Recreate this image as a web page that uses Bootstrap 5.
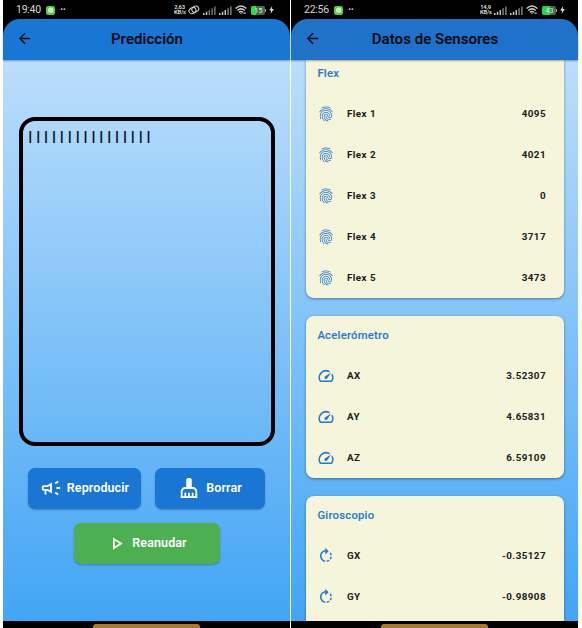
<!DOCTYPE html>
<html lang="es">
<head>
<meta charset="utf-8">
<meta name="viewport" content="width=device-width, initial-scale=1">
<title>Predicción y Datos de Sensores</title>
<link href="https://cdn.jsdelivr.net/npm/bootstrap@5.3.0/dist/css/bootstrap.min.css" rel="stylesheet">
<style>
body{font-family:Roboto,sans-serif;background:#fff;width:582px;height:628px;overflow:hidden;line-height:1}
svg{fill:currentColor;flex:none;display:block}
.screens{padding-left:3px;gap:1px}
.phone{width:287px;height:628px;background:#000}
.status{height:19px;padding:1px 16px 0 13px;color:#d4d4d4;font-size:10.5px;letter-spacing:-.25px}
.phone-b .status{padding-right:13px}
.appicon{width:9px;height:9px;border-radius:2px;background:#58c83c;margin-left:5px}
.dots{margin-left:5px;font-weight:700}
.rate{font-size:5.8px;line-height:5.5px;font-weight:700;width:11px;letter-spacing:-.2px;white-space:nowrap}
.topbar{height:40.5px;background:#1976d2;border-radius:17px 17px 0 0;color:#040b16;padding-left:12.5px;box-shadow:0 1px 2px #0005;z-index:2}
.phone-b .topbar{background:#2071c8}
.topbar h1{font-size:15px;font-weight:600;letter-spacing:.04px;margin:0 0 1px;padding-right:28.5px}
.topbar svg{margin-bottom:2px}
.view{height:561.5px;background:linear-gradient(#bbdefb,#42a5f5);overflow:hidden}
.navbar-pill{height:7px;padding-top:3px}
.navbar-pill span{width:107px;height:4px;border-radius:3px 3px 0 0;background:#a87a2c}
.output{width:256px;height:329px;border:4px solid #000;border-radius:16px;margin-top:57.5px;padding:8px 0 0 5.6px;font-size:16.5px;line-height:17px;color:#04101c;letter-spacing:-.35px}
.action{height:40.5px;border:0;border-radius:7px;color:#fff;background:#1976d2;font-size:12.5px;font-weight:600;letter-spacing:.1px;box-shadow:0 1px 2px #0004;padding:0}
.act-play{width:113px;gap:5px}
.act-clear{width:110px;gap:6px}
.act-go{width:146px;gap:5px;background:#4caf50}
.sensors{padding:0 14px 0 15px;margin-top:-6px;gap:17.5px}
.sensor{background:#f5f5dc;border-radius:8px;box-shadow:0 1px 3px #0006;padding:0 18px 0 11.4px}
.sensor h2{height:39.5px;padding-top:2px;font-size:11.3px;font-weight:500;color:#2a7ac8;margin:0;letter-spacing:.24px;-webkit-text-stroke:.1px #2a7ac8}
.reading{height:41px;font-size:9.8px;font-weight:700;color:#1a1a18;letter-spacing:.45px}
.reading svg{color:#2878c8;margin-right:11.6px}
</style>
<script src="https://cdn.jsdelivr.net/npm/bootstrap@5.3.0/dist/js/bootstrap.bundle.min.js"></script>
</head>
<body>
<svg width="0" height="0" class="position-absolute" aria-hidden="true">
<symbol id="back" viewBox="0 0 24 24"><path d="M20 11H7.83l5.59-5.59L12 4l-8 8 8 8 1.41-1.41L7.83 13H20v-2z"/></symbol>
<symbol id="campaign" viewBox="0 0 24 24"><path d="M18 11v2h4v-2h-4zM16 17.61c.96.71 2.21 1.65 3.2 2.39.4-.53.8-1.07 1.2-1.6-.99-.74-2.24-1.68-3.2-2.4-.4.54-.8 1.08-1.2 1.61zM20.4 5.6C20 5.07 19.6 4.53 19.2 4c-.99.74-2.24 1.68-3.2 2.4.4.53.8 1.07 1.2 1.6.96-.72 2.21-1.65 3.2-2.4zM4 9c-1.1 0-2 .9-2 2v2c0 1.1.9 2 2 2h1v4h2v-4h1l5 3V6L8 9H4zm5.03 1.71L11 9.53v4.94l-1.97-1.18-.48-.29H4v-2h4.55l.48-.29z"/></symbol>
<symbol id="clean" viewBox="0 0 24 24"><path d="M16 11h-1V3c0-1.1-.9-2-2-2h-2c-1.1 0-2 .9-2 2v8H8c-2.76 0-5 2.24-5 5v7h18v-7c0-2.76-2.24-5-5-5zm3 10h-2v-3c0-.55-.45-1-1-1s-1 .45-1 1v3h-2v-3c0-.55-.45-1-1-1s-1 .45-1 1v3H9v-3c0-.55-.45-1-1-1s-1 .45-1 1v3H5v-5c0-1.65 1.35-3 3-3h8c1.65 0 3 1.35 3 3v5z"/></symbol>
<symbol id="play" viewBox="0 0 24 24"><path d="M10 8.64L15.27 12 10 15.36V8.64M8 5v14l11-7L8 5z"/></symbol>
<symbol id="speed" viewBox="0 0 24 24"><path d="M20.38 8.57l-1.23 1.85a8 8 0 0 1-.22 7.58H5.07A8 8 0 0 1 15.58 6.85l1.85-1.23A10 10 0 0 0 3.35 19a2 2 0 0 0 1.72 1h13.85a2 2 0 0 0 1.74-1 10 10 0 0 0-.27-10.44zm-9.79 6.84a2 2 0 0 0 2.83 0l5.66-8.49-8.49 5.66a2 2 0 0 0 0 2.83z"/></symbol>
<symbol id="rotate" viewBox="0 0 24 24"><path d="M15.55 5.55L11 1v3.07C7.06 4.56 4 7.92 4 12s3.05 7.44 7 7.93v-2.02c-2.84-.48-5-2.94-5-5.91s2.16-5.43 5-5.91V10l4.55-4.45zM19.93 11c-.17-1.39-.72-2.73-1.62-3.89l-1.42 1.42c.54.75.88 1.6 1.02 2.47h2.02zM13 17.9v2.02c1.39-.17 2.74-.71 3.9-1.61l-1.44-1.44c-.75.54-1.59.89-2.46 1.03zm3.89-2.42l1.42 1.41c.9-1.16 1.45-2.5 1.62-3.89h-2.02c-.14.87-.48 1.72-1.02 2.48z"/></symbol>
<symbol id="finger" viewBox="0 0 24 24"><path d="M17.81 4.47c-.08 0-.16-.02-.23-.06C15.66 3.42 14 3 12.01 3c-1.98 0-3.86.47-5.57 1.41-.24.13-.54.04-.68-.2-.13-.24-.04-.55.2-.68C7.82 2.52 9.86 2 12.01 2c2.13 0 3.99.47 6.03 1.52.25.13.34.43.21.67-.09.18-.26.28-.44.28zM3.5 9.72c-.1 0-.2-.03-.29-.09-.23-.16-.28-.47-.12-.7.99-1.4 2.25-2.5 3.75-3.27C9.98 4.04 14 4.03 17.15 5.65c1.5.77 2.76 1.86 3.75 3.25.16.22.11.54-.12.7-.23.16-.54.11-.7-.12-.9-1.26-2.04-2.25-3.39-2.94-2.87-1.47-6.54-1.47-9.4.01-1.36.7-2.5 1.7-3.4 2.96-.08.14-.23.21-.39.21zm6.25 12.07c-.13 0-.26-.05-.35-.15-.87-.87-1.34-1.43-2.01-2.64-.69-1.23-1.05-2.73-1.05-4.34 0-2.97 2.54-5.39 5.66-5.39s5.66 2.42 5.66 5.39c0 .28-.22.5-.5.5s-.5-.22-.5-.5c0-2.42-2.09-4.39-4.66-4.39-2.57 0-4.66 1.97-4.66 4.39 0 1.44.32 2.77.93 3.85.64 1.15 1.08 1.64 1.85 2.42.19.2.19.51 0 .71-.11.1-.24.15-.37.15zm7.17-1.85c-1.19 0-2.24-.3-3.1-.89-1.49-1.01-2.38-2.65-2.38-4.39 0-.28.22-.5.5-.5s.5.22.5.5c0 1.41.72 2.74 1.94 3.56.71.48 1.54.71 2.54.71.24 0 .64-.03 1.04-.1.27-.05.53.13.58.41.05.27-.13.53-.41.58-.57.11-1.07.12-1.21.12zM14.91 22c-.04 0-.09-.01-.13-.02-1.59-.44-2.63-1.03-3.72-2.1-1.4-1.39-2.17-3.24-2.17-5.22 0-1.62 1.38-2.94 3.08-2.94 1.7 0 3.08 1.32 3.08 2.94 0 1.07.93 1.94 2.08 1.94s2.08-.87 2.08-1.94c0-3.77-3.25-6.83-7.25-6.83-2.84 0-5.44 1.58-6.61 4.03-.39.81-.59 1.76-.59 2.8 0 .78.07 2.01.67 3.61.1.26-.03.55-.29.64-.26.1-.55-.04-.64-.29-.49-1.31-.73-2.61-.73-3.96 0-1.2.23-2.29.68-3.24 1.33-2.79 4.28-4.6 7.51-4.6 4.55 0 8.25 3.51 8.25 7.83 0 1.62-1.38 2.94-3.08 2.94s-3.08-1.32-3.08-2.94c0-1.07-.93-1.94-2.08-1.94s-2.08.87-2.08 1.94c0 1.71.66 3.31 1.87 4.51.95.94 1.86 1.46 3.27 1.85.27.07.42.35.35.61-.05.23-.26.38-.47.38z"/></symbol>
<symbol id="leaf" viewBox="0 0 9 9"><circle cx="4.7" cy="4.3" r="2.7" fill="#d8f5cd"/><path d="M1.6 7.7l.7-2.2 1.5 1.5zM3.2 3.4l2.6 2" fill="#d8f5cd" stroke="#58c83c" stroke-width=".7"/></symbol>
<symbol id="link" viewBox="0 0 12 10"><g fill="none" stroke="#ccc" stroke-width="1.1"><ellipse cx="4.5" cy="5.6" rx="3.6" ry="2.9" transform="rotate(-25 4.5 5.6)"/><ellipse cx="7.3" cy="4.2" rx="3.6" ry="2.9" transform="rotate(-25 7.3 4.2)"/></g></symbol>
<symbol id="signal" viewBox="0 0 13 9"><path fill="#ccc" d="M0 7h1.5v2H0zM2.8 5.7h1.5V9H2.8z"/><path fill="#777" d="M5.6 4h1.4v5H5.6zM8.4 2.2h1.4V9H8.4zM11.2.5h1.4V9h-1.4z"/></symbol>
<symbol id="signal-mid" viewBox="0 0 13 9"><path fill="#ccc" d="M0 7h1.5v2H0zM2.8 5.7h1.5V9H2.8zM5.6 4h1.4v5H5.6z"/><path fill="#888" d="M8.4 2.2h1.4V9H8.4zM11.2.5h1.4V9h-1.4z"/></symbol>
<symbol id="wifi" viewBox="0 0 12 10"><path fill="none" stroke="#ccc" stroke-width="1.5" d="M.6 3.5Q6-1.4 11.4 3.5M2.3 5.5Q6 2.2 9.7 5.5M4 7.4Q6 5.7 8 7.4"/><path fill="#ccc" d="M5 8.2h2L6 9.6zM8.5 7.5h2.3v1.2H8.5z"/></symbol>
<symbol id="bolt" viewBox="0 0 5 8"><path fill="#ddd" d="M3.2 0L.2 4.6h1.9L1.6 8l3.2-4.9H2.8z"/></symbol>
</svg>
<div class="screens d-flex">
 <section class="phone d-flex flex-column">
  <div class="status d-flex align-items-center">
   <span>19:40</span><span class="appicon"><svg width="9" height="9"><use href="#leaf"/></svg></span><span class="dots">··</span>
   <span class="rate ms-auto text-center">2,63<br>KB/s</span>
   <svg width="12" height="10" style="margin-left:3px"><use href="#link"/></svg>
   <svg width="13" height="9" style="margin-left:3px"><use href="#signal"/></svg>
   <svg width="13" height="9" style="margin-left:3px"><use href="#signal-mid"/></svg>
   <svg width="12" height="10" style="margin-left:3px"><use href="#wifi"/></svg>
   <svg class="ms-1" width="15" height="9" viewBox="0 0 15 9"><rect width="14" height="9" rx="2" fill="#47664a"/><path fill="#20e53e" d="M2 0h3v9H2a2 2 0 0 1-2-2V2a2 2 0 0 1 2-2z"/><path fill="#ccc" d="M14.2 3h.8v3h-.8z"/><text x="3.2" y="7.2" font-size="7.5" fill="#e4eee4">15</text></svg>
   <svg width="5" height="8" style="margin-left:3px"><use href="#bolt"/></svg>
  </div>
  <header class="topbar d-flex align-items-center position-relative"><svg width="17" height="17"><use href="#back"/></svg><h1 class="flex-fill text-center">Predicción</h1></header>
  <main class="view d-flex flex-column align-items-center">
   <div class="output">I I I I I I I I I I I I I I I I</div>
   <div class="d-flex w-100" style="gap:14px;padding:22px 0 0 25px">
    <button class="action act-play d-flex align-items-center justify-content-center"><svg width="22" height="22"><use href="#campaign"/></svg>Reproducir</button>
    <button class="action act-clear d-flex align-items-center justify-content-center"><svg width="22" height="22"><use href="#clean"/></svg>Borrar</button>
   </div>
   <button class="action act-go d-flex align-items-center justify-content-center" style="margin-top:14.5px"><svg width="21" height="21"><use href="#play"/></svg>Reanudar</button>
  </main>
  <footer class="navbar-pill d-flex justify-content-center"><span></span></footer>
 </section>
 <section class="phone phone-b d-flex flex-column">
  <div class="status d-flex align-items-center">
   <span>22:56</span><span class="appicon"><svg width="9" height="9"><use href="#leaf"/></svg></span><span class="dots">··</span>
   <span class="rate ms-auto text-center">14,9<br>KB/s</span>
   <svg width="13" height="9" style="margin-left:3px"><use href="#signal-mid"/></svg>
   <svg width="13" height="9" style="margin-left:3px"><use href="#signal-mid"/></svg>
   <svg width="12" height="10" style="margin-left:3px"><use href="#wifi"/></svg>
   <svg class="ms-1" width="15" height="9" viewBox="0 0 15 9"><rect width="14" height="9" rx="2" fill="#47664a"/><path fill="#20d94a" d="M2 0h6v9H2a2 2 0 0 1-2-2V2a2 2 0 0 1 2-2z"/><path fill="#ccc" d="M14.2 3h.8v3h-.8z"/><text x="3.2" y="7.2" font-size="7.5" fill="#e4eee4">43</text></svg>
   <svg width="5" height="8" style="margin-left:3px"><use href="#bolt"/></svg>
  </div>
  <header class="topbar d-flex align-items-center position-relative"><svg width="17" height="17"><use href="#back"/></svg><h1 class="flex-fill text-center">Datos de Sensores</h1></header>
  <main class="view">
   <div class="sensors d-flex flex-column">
    <div class="sensor"><h2 class="d-flex align-items-center">Flex</h2>
     <div class="reading d-flex align-items-center"><svg width="18" height="18"><use href="#finger"/></svg><span>Flex 1</span><span class="ms-auto">4095</span></div>
     <div class="reading d-flex align-items-center"><svg width="18" height="18"><use href="#finger"/></svg><span>Flex 2</span><span class="ms-auto">4021</span></div>
     <div class="reading d-flex align-items-center"><svg width="18" height="18"><use href="#finger"/></svg><span>Flex 3</span><span class="ms-auto">0</span></div>
     <div class="reading d-flex align-items-center"><svg width="18" height="18"><use href="#finger"/></svg><span>Flex 4</span><span class="ms-auto">3717</span></div>
     <div class="reading d-flex align-items-center"><svg width="18" height="18"><use href="#finger"/></svg><span>Flex 5</span><span class="ms-auto">3473</span></div>
    </div>
    <div class="sensor"><h2 class="d-flex align-items-center">Acelerómetro</h2>
     <div class="reading d-flex align-items-center"><svg width="18" height="18"><use href="#speed"/></svg><span>AX</span><span class="ms-auto">3.52307</span></div>
     <div class="reading d-flex align-items-center"><svg width="18" height="18"><use href="#speed"/></svg><span>AY</span><span class="ms-auto">4.65831</span></div>
     <div class="reading d-flex align-items-center"><svg width="18" height="18"><use href="#speed"/></svg><span>AZ</span><span class="ms-auto">6.59109</span></div>
    </div>
    <div class="sensor"><h2 class="d-flex align-items-center">Giroscopio</h2>
     <div class="reading d-flex align-items-center"><svg width="18" height="18"><use href="#rotate"/></svg><span>GX</span><span class="ms-auto">-0.35127</span></div>
     <div class="reading d-flex align-items-center"><svg width="18" height="18"><use href="#rotate"/></svg><span>GY</span><span class="ms-auto">-0.98908</span></div>
     <div class="reading"></div>
    </div>
   </div>
  </main>
  <footer class="navbar-pill d-flex justify-content-center"><span></span></footer>
 </section>
</div>
</body>
</html>
